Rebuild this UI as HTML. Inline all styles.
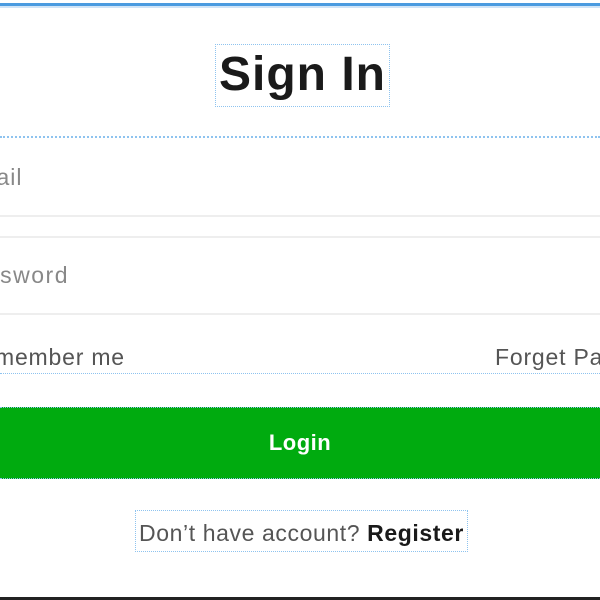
<!DOCTYPE html>
<html><head><style>
html,body{margin:0;padding:0;width:600px;height:600px;overflow:hidden;background:#fff;font-family:"Liberation Sans",sans-serif}
#w{position:relative;width:600px;height:600px;overflow:hidden}
.a{position:absolute;white-space:nowrap}
</style></head><body><div id="w">
<div class="a" style="left:0;top:3px;width:600px;height:3px;background:#4a9be0"></div>
<div class="a" style="left:0;top:6px;width:600px;height:2px;background:#cfe4f7"></div>
<div class="a" style="left:215px;top:44px;width:173px;height:61px;border:1px dotted #8ec3ef;"></div>
<div class="a" style="left:213px;top:47px;width:179px;text-align:center;font-size:48px;font-weight:bold;color:#1a1a1a;letter-spacing:1px">Sign In</div>
<div class="a" style="left:0;top:136px;width:600px;border-top:2px dotted #8ec3ef"></div>
<div class="a" style="left:-40px;top:164px;font-size:23px;color:#888;letter-spacing:1px">Email</div>
<div class="a" style="left:0;top:215px;width:600px;height:2px;background:#eee"></div>
<div class="a" style="left:0;top:236px;width:600px;height:2px;background:#eee"></div>
<div class="a" style="left:-44px;top:262px;font-size:23px;color:#888;letter-spacing:1.5px">Password</div>
<div class="a" style="left:0;top:313px;width:600px;height:2px;background:#eee"></div>
<div class="a" style="left:-36px;top:344px;font-size:23px;color:#555;letter-spacing:0.8px">Remember me</div>
<div class="a" style="left:495px;top:344px;font-size:23px;color:#555;letter-spacing:0.8px">Forget Password</div>
<div class="a" style="left:0;top:373px;width:600px;border-top:1px dotted #8ec3ef"></div>
<div class="a" style="left:0;top:407px;width:600px;height:72px;background:#00ab0f;border-top:1px dotted #8ec3ef;border-bottom:1px dotted #8ec3ef;box-sizing:border-box"></div>
<div class="a" style="left:0;top:430px;width:600px;text-align:center;font-size:22px;font-weight:bold;color:#fff;letter-spacing:0.5px">Login</div>
<div class="a" style="left:135px;top:510px;width:331px;height:40px;border:1px dotted #8ec3ef"></div>
<div class="a" style="left:116px;top:520px;width:371px;text-align:center;font-size:23px;color:#555;letter-spacing:0.6px">Don’t have account? <b style="color:#1a1a1a">Register</b></div>
<div class="a" style="left:0;top:597px;width:600px;height:3px;background:#222"></div>
</div></body></html>
